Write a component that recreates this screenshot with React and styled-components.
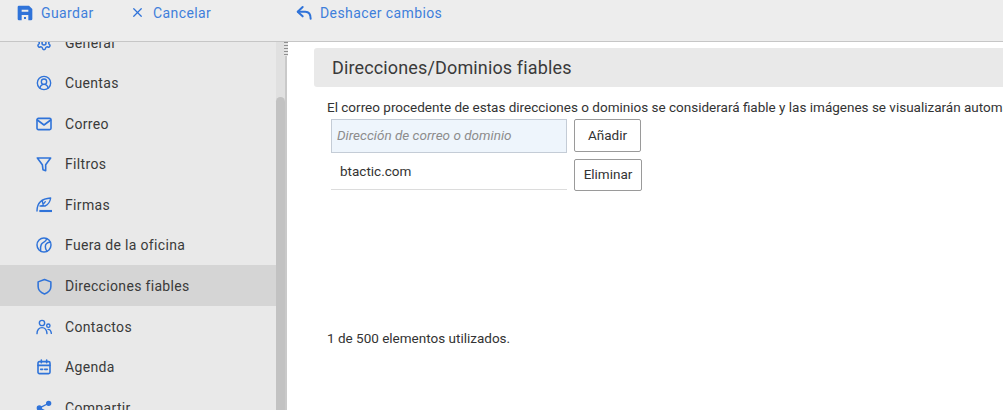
import styled, { createGlobalStyle } from 'styled-components'
import { X, CircleUserRound, Settings } from 'lucide-react'

const GlobalStyle = createGlobalStyle`
    html, body {
        margin: 0;
        height: 100%;
        overflow: hidden;
        background: #fff;
        font-family: Roboto, "Liberation Sans", sans-serif;
    }
`

const blue = '#2f73d9'

const Svg = ({ children, sw = 2, size = 16 }) => (
    <svg width={size} height={size} viewBox="0 0 24 24" fill="none" stroke={blue} strokeWidth={sw} strokeLinecap="round" strokeLinejoin="round">
        {children}
    </svg>
)

const MailIcon = () => (
    <Svg sw={2.4}>
        <rect x="1.500" y="3.500" width="21" height="17" rx="2" />
        <path d="M2 6l10 7.500L22 6" />
    </Svg>
)
const FilterIcon = () => (
    <Svg sw={2.4}>
        <path d="M2 3h20l-7.500 10v9l-4-1.500-1-7.500z" />
    </Svg>
)
const SignatureIcon = () => (
    <Svg sw={2.1}>
        <path d="M1.500 21C1.500 11 7 2.500 22 1.500c-1 6-4 10-8.500 12H6" />
        <path d="M9 13l5-6M9.500 6.500l1.500 6" />
        <path d="M5 21h19" strokeWidth="3.200" strokeLinecap="butt" />
    </Svg>
)
const BallIcon = () => (
    <Svg sw={2.2}>
        <circle cx="12" cy="12" r="10.500" />
        <path d="M16 2.500c-1 6-6 4-8 8.500s-1 7-1 9.500" />
        <path d="M21.500 8c-5 0-7.500 3-7.500 6.500s1.500 5.500 2.500 7" />
    </Svg>
)
const ShieldIcon = () => (
    <Svg sw={2.2} size={17}>
        <path d="M12 2l9 3.500v6.500c0 5-3.500 8.500-9 10.500C6.500 20.500 3 17 3 12V5.500z" />
    </Svg>
)
const PeopleIcon = () => (
    <Svg sw={2.1}>
        <circle cx="9" cy="6" r="4" />
        <circle cx="18.500" cy="10" r="2.500" />
        <path d="M1.500 22c0-6 3-9 7.500-9s7 3 7.500 9" />
        <path d="M18 15.500c2.500 0 4.500 2 5 6" />
    </Svg>
)
const CalendarIcon = () => (
    <Svg sw={2.4}>
        <rect x="3" y="4" width="18" height="18" rx="2" />
        <path d="M3 9.500h18M8 1.500v4M16 1.500v4" />
        <path d="M7 15.500h3M13 15.500h4" />
    </Svg>
)
const ShareIcon = () => (
    <Svg>
        <circle cx="19" cy="5" r="3" fill={blue} />
        <circle cx="5" cy="12" r="3" fill={blue} />
        <circle cx="19" cy="19" r="3" fill={blue} />
        <path d="M7 11l10-5M7 13l10 5" />
    </Svg>
)
const SaveIcon = () => (
    <svg width="16" height="16" viewBox="0 0 24 24" fill={blue}>
        <path fillRule="evenodd" d="M3 1h15l5 5v15a2 2 0 0 1-2 2H3a2 2 0 0 1-2-2V3a2 2 0 0 1 2-2zm4 6v3h10V7zm0 8v8h10v-8zm3.500 3h3v3h-3z" />
    </svg>
)
const UndoIcon = () => (
    <Svg sw={3}>
        <path d="M10 3L2.500 10l7.500 7" />
        <path d="M3 10h11c5 0 8 3.500 8 10.500" />
    </Svg>
)

const navItems = [
    { label: 'General', icon: <Settings size={16} color={blue} strokeWidth={2.2} /> },
    { label: 'Cuentas', icon: <CircleUserRound size={16} color={blue} strokeWidth={2.1} /> },
    { label: 'Correo', icon: <MailIcon /> },
    { label: 'Filtros', icon: <FilterIcon /> },
    { label: 'Firmas', icon: <SignatureIcon /> },
    { label: 'Fuera de la oficina', icon: <BallIcon /> },
    { label: 'Direcciones fiables', icon: <ShieldIcon />, active: true },
    { label: 'Contactos', icon: <PeopleIcon /> },
    { label: 'Agenda', icon: <CalendarIcon /> },
    { label: 'Compartir', icon: <ShareIcon /> },
]

const App = () => {
    return (
        <Page>
            <GlobalStyle />
            <Toolbar>
                <ToolButton $width="113px"><SaveIcon />Guardar</ToolButton>
                <ToolButton $width="166px"><X size={15} color={blue} strokeWidth={2} />Cancelar</ToolButton>
                <ToolButton><UndoIcon />Deshacer cambios</ToolButton>
            </Toolbar>
            <Body>
                <Sidebar>
                    <NavList>
                        {navItems.map(item => (
                            <NavRow key={item.label} $active={item.active}>
                                <IconSlot>{item.icon}</IconSlot>
                                <span>{item.label}</span>
                            </NavRow>
                        ))}
                    </NavList>
                    <ScrollTrack><ScrollThumb /></ScrollTrack>
                </Sidebar>
                <Divider>
                    <Handle />
                </Divider>
                <Content>
                    <SectionTitle>Direcciones/Dominios fiables</SectionTitle>
                    <Description>El correo procedente de estas direcciones o dominios se considerará fiable y las imágenes se visualizarán automáticamente.</Description>
                    <FormRow>
                        <AddressInput placeholder="Dirección de correo o dominio" />
                        <Button>Añadir</Button>
                    </FormRow>
                    <AddressRow>
                        <AddressName>btactic.com</AddressName>
                        <Button $small>Eliminar</Button>
                    </AddressRow>
                    <Usage>1 de 500 elementos utilizados.</Usage>
                </Content>
            </Body>
        </Page>
    )
}

const Page = styled.div`
    height: 410px;
    width: 1003px;
    display: flex;
    flex-direction: column;
    overflow: hidden;
    color: #3a3a3a;
`
const Toolbar = styled.div`
    height: 42px;
    flex: none;
    box-sizing: border-box;
    display: flex;
    align-items: flex-start;
    padding: 4px 0 0 17px;
    background: #ededed;
    border-bottom: 1px solid #c6c6c6;
`
const ToolButton = styled.div`
    width: ${({ $width }) => $width || 'auto'};
    display: flex;
    align-items: center;
    gap: 8px;
    height: 17px;
    font-size: 14px;
    letter-spacing: 0.4px;
    color: #3f7fdb;
`
const Body = styled.div`
    flex: 1;
    display: flex;
    min-height: 0;
`
const Sidebar = styled.div`
    width: 285px;
    flex: none;
    display: flex;
    background: #e9e9e9;
    overflow: hidden;
`
const NavList = styled.div`
    width: 276px;
    flex: none;
    margin-top: -20.300px;
`
const NavRow = styled.div`
    height: 40.600px;
    box-sizing: border-box;
    padding: 1px 0 0 36px;
    display: flex;
    align-items: center;
    gap: 12px;
    font-size: 14px;
    letter-spacing: 0.33px;
    background: ${({ $active }) => ($active ? '#d5d5d5' : 'transparent')};
`
const IconSlot = styled.span`
    width: 17px;
    flex: none;
    display: flex;
`
const ScrollTrack = styled.div`
    width: 9px;
    flex: none;
    padding-top: 55px;
    background: #e0e0e0;
`
const ScrollThumb = styled.div`
    height: 320px;
    border-radius: 5px 5px 0 0;
    background: #c2c2c2;
`
const Divider = styled.div`
    width: 2px;
    flex: none;
    position: relative;
    background: #c9c9c9;
`
const Handle = styled.div`
    position: absolute;
    left: -1px;
    top: 0;
    width: 4px;
    height: 14px;
    background: repeating-linear-gradient(to bottom, #8f8f8f 0 1px, #e4e4e4 1px 3px);
`
const Content = styled.div`
    flex: 1;
    min-width: 0;
    overflow: hidden;
    padding-top: 6px;
`
const SectionTitle = styled.div`
    height: 39px;
    margin-left: 27px;
    padding-left: 18px;
    display: flex;
    align-items: center;
    font-size: 18px;
    letter-spacing: 0.14px;
    background: #e9e9e9;
    border-radius: 3px 0 0 3px;
`
const Description = styled.div`
    margin: 12px 0 0 40px;
    height: 17px;
    line-height: 17px;
    font-size: 13.500px;
    white-space: nowrap;
    color: #333;
`
const FormRow = styled.div`
    display: flex;
    gap: 7px;
    margin: 3px 0 0 44px;
`
const AddressInput = styled.input`
    width: 236px;
    height: 34px;
    box-sizing: border-box;
    padding: 0 5px 2px;
    border: 1px solid #c4ccd6;
    background: #eef5fc;
    font-family: inherit;
    font-size: 13.500px;
    font-style: italic;
    outline: none;
    &::placeholder {
        color: #8c8c8c;
        opacity: 1;
    }
`
const Button = styled.button`
    width: ${({ $small }) => ($small ? '68px' : '67px')};
    height: ${({ $small }) => ($small ? '32px' : '33px')};
    box-sizing: border-box;
    padding: 0 0 2px;
    border: 1px solid #9a9a9a;
    border-radius: 2px;
    background: #fff;
    font-family: inherit;
    font-size: 13.500px;
    color: #333;
`
const AddressRow = styled.div`
    display: flex;
    align-items: flex-start;
    gap: 7px;
    margin: 6px 0 0 44px;
`
const AddressName = styled.div`
    width: 236px;
    height: 31px;
    box-sizing: border-box;
    padding: 3px 0 0 9px;
    line-height: 18px;
    font-size: 13.500px;
    border-bottom: 1px solid #dcdcdc;
    color: #333;
`
const Usage = styled.div`
    margin: 139px 0 0 40px;
    font-size: 13.500px;
    line-height: 17px;
    color: #333;
`

export default App
